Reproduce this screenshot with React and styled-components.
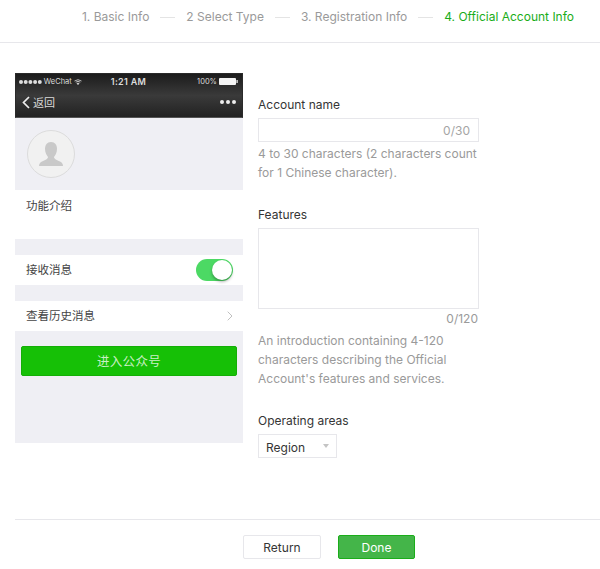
import React from 'react'
import styled, { createGlobalStyle } from 'styled-components'

const Global = createGlobalStyle`
  html, body { margin: 0; padding: 0; background: #fff; }
  body { font-family: Inter, "Noto Sans CJK SC", sans-serif; color: #353535; }
  * { box-sizing: border-box; }
`

const Page = styled.div`
  width: 600px;
  height: 569px;
  overflow: hidden;
  display: flex;
  flex-direction: column;
`

const Steps = styled.ol`
  list-style: none;
  margin: 0;
  height: 43px;
  padding: 9px 26px 0 0;
  display: flex;
  justify-content: flex-end;
  border-bottom: 1px solid #e7e7eb;
  font-size: 12px;
  line-height: 16px;
`

const Step = styled.li`
  color: ${p => (p.$active ? '#1aad19' : '#9a9a9a')};
  display: flex;
  align-items: center;
  height: 16px;
  &:not(:last-child)::after {
    content: '';
    width: 15px;
    height: 1px;
    background: #e4e4e4;
    margin: 0 11px;
  }
`

const Main = styled.div`
  flex: 1;
  display: flex;
  gap: 15px;
  padding: 30px 0 0 15px;
`

const Phone = styled.div`
  width: 228px;
  height: 370px;
  background: #efeff4;
  display: flex;
  flex-direction: column;
`

const TopBar = styled.div`
  height: 45px;
  padding: 0 4px 0 3px;
  background: linear-gradient(#1c1c1c, #3a3a3a 50%, #222);
  color: #fff;
  display: flex;
  flex-direction: column;
  border: 1px solid #2a2a2a;
  border-bottom: 1px solid #555;
`

const StatusRow = styled.div`
  height: 15px;
  display: grid;
  grid-template-columns: 1fr auto 1fr;
  align-items: center;
  font-size: 7.5px;
  color: #ddd;
`

const StatusGroup = styled.span`
  display: flex;
  align-items: center;
  justify-content: ${p => (p.$end ? 'flex-end' : 'flex-start')};
  gap: 2px;
`

const StatusTime = styled.span`
  font-weight: 600;
  font-size: 9px;
  letter-spacing: 0.3px;
`

const NavRow = styled.div`
  flex: 1;
  display: flex;
  align-items: center;
  justify-content: space-between;
  padding: 0 2px 2px 3px;
  font-size: 11px;
  color: #d8d8d8;
`

const BackLink = styled.span`
  display: flex;
  align-items: center;
  gap: 3px;
`

const Avatar = styled.div`
  height: 72px;
  padding: 12px 0 0 12px;
`

const AvatarCircle = styled.div`
  width: 48px;
  height: 48px;
  border-radius: 50%;
  background: #f1f1f1;
  border: 1px solid #dcdcdc;
  display: flex;
  align-items: center;
  justify-content: center;
`

const Cell = styled.div`
  background: #fff;
  height: ${p => p.$height}px;
  margin-bottom: ${p => p.$gap}px;
  padding: ${p => (p.$top ? '8px 10px 0 11px' : '0 10px 0 11px')};
  display: flex;
  align-items: ${p => (p.$top ? 'flex-start' : 'center')};
  justify-content: space-between;
  font-size: 11.5px;
  line-height: 16px;
  color: #444;
`

const Toggle = styled.span`
  position: relative;
  width: 37px;
  height: 22px;
  border-radius: 11px;
  background: #4cd964;
  &::after {
    content: '';
    position: absolute;
    right: 1px;
    top: 1px;
    width: 20px;
    height: 20px;
    border-radius: 50%;
    background: #fff;
    box-shadow: 0 2px 3px rgba(0, 0, 0, 0.3);
  }
`

const EnterButton = styled.div`
  margin: 15px 6px 0;
  height: 30px;
  padding-bottom: 2px;
  border-radius: 2px;
  background: #16c006;
  border: 1px solid #14ae06;
  color: #c9efc4;
  font-size: 12.5px;
  display: flex;
  align-items: center;
  justify-content: center;
  letter-spacing: 0.3px;
`

const Form = styled.form`
  width: 221px;
  padding-top: 24px;
  display: flex;
  flex-direction: column;
`

const Field = styled.div`
  margin-bottom: ${p => p.$gap}px;
`

const Label = styled.div`
  font-size: 12px;
  line-height: 16px;
  color: #353535;
  margin-bottom: 5px;
`

const InputBox = styled.div`
  height: ${p => p.$height}px;
  border: 1px solid #e7e7eb;
  display: flex;
  align-items: center;
  justify-content: flex-end;
  padding-right: 8px;
  font-size: 12px;
  color: #a5a5a5;
`

const Counter = styled.div`
  text-align: right;
  padding-right: 1px;
  font-size: 12px;
  line-height: 19px;
  color: #9a9a9a;
`

const Hint = styled.p`
  margin: ${p => p.$top}px 0 0;
  font-size: 12px;
  line-height: 19px;
  color: #9a9a9a;
`

const Select = styled.div`
  position: relative;
  width: 79px;
  height: 24px;
  border: 1px solid #e7e7eb;
  padding: 3px 0 0 7px;
  display: flex;
  align-items: center;
  font-size: 12px;
  color: #353535;
  &::after {
    content: '';
    position: absolute;
    right: 7px;
    top: 9px;
    border: 3px solid transparent;
    border-top: 4px solid #c4c4c4;
    border-bottom: 0;
  }
`

const Footer = styled.div`
  margin-left: 15px;
  height: 50px;
  border-top: 1px solid #e7e7eb;
  padding: 15px 0 0 228px;
  display: flex;
  gap: 17px;
`

const Button = styled.div`
  width: ${p => (p.$primary ? 77 : 78)}px;
  height: 24px;
  border-radius: 2px;
  border: 1px solid ${p => (p.$primary ? '#1aad19' : '#e7e7eb')};
  background: ${p => (p.$primary ? '#44b549' : '#fff')};
  color: ${p => (p.$primary ? '#fff' : '#353535')};
  font-size: 12px;
  display: flex;
  align-items: center;
  justify-content: center;
`

const Wifi = () => (
  <svg width="8" height="6" viewBox="0 0 8 6" fill="none" stroke="#ddd" strokeWidth="0.8">
    <path d="M0.5 2 Q4 -0.6 7.5 2" />
    <path d="M1.7 3.2 Q4 1.4 6.3 3.2" />
    <path d="M3 4.5 Q4 3.7 5 4.5 L4 5.6 Z" fill="#ddd" />
  </svg>
)

const Battery = () => (
  <svg width="19" height="7" viewBox="0 0 19 7">
    <rect x="0" y="0" width="17" height="7" rx="1" fill="#f4f4f4" />
    <rect x="17.4" y="2" width="1.4" height="3" fill="#ddd" />
  </svg>
)

const Dots = ({ count, size, gap, color }) => (
  <svg width={count * size + (count - 1) * gap} height={size}>
    {Array.from({ length: count }).map((_, i) => (
      <circle key={i} cx={size / 2 + i * (size + gap)} cy={size / 2} r={size / 2} fill={color} />
    ))}
  </svg>
)

const App = () => (
  <Page>
    <Global />
    <Steps>
      <Step>1. Basic Info</Step>
      <Step>2 Select Type</Step>
      <Step>3. Registration Info</Step>
      <Step $active>4. Official Account Info</Step>
    </Steps>
    <Main>
      <Phone>
        <TopBar>
          <StatusRow>
            <StatusGroup>
              <Dots count={5} size={4} gap={0.7} color="#ddd" />
              WeChat
              <Wifi />
            </StatusGroup>
            <StatusTime>1:21 AM</StatusTime>
            <StatusGroup $end>
              100%
              <Battery />
            </StatusGroup>
          </StatusRow>
          <NavRow>
            <BackLink>
              <svg width="8" height="13" viewBox="0 0 8 13" fill="none" stroke="#eee" strokeWidth="1.7">
                <path d="M7 1 L1.5 6.5 L7 12" />
              </svg>
              返回
            </BackLink>
            <Dots count={3} size={4} gap={2} color="#eee" />
          </NavRow>
        </TopBar>
        <Avatar>
          <AvatarCircle>
            <svg width="24" height="25" viewBox="0 0 24 25" fill="#c9c9c9">
              <path d="M12 0 C16 0 18 3 18 7 C18 11 16 13.500 15 15 C15 17 18 18 21 19.500 C23 20.500 24 22 24 24 L0 24 C0 22 1 20.500 3 19.500 C6 18 9 17 9 15 C8 13.500 6 11 6 7 C6 3 8 0 12 0 Z" />
            </svg>
          </AvatarCircle>
        </Avatar>
        <Cell $height={49} $gap={16} $top>功能介绍</Cell>
        <Cell $height={30} $gap={16}>
          接收消息
          <Toggle />
        </Cell>
        <Cell $height={30} $gap={0}>
          查看历史消息
          <svg width="6" height="10" viewBox="0 0 6 10" fill="none" stroke="#c0c0c0" strokeWidth="1">
            <path d="M0.700 0.700 L5 5 L0.700 9.300" />
          </svg>
        </Cell>
        <EnterButton>进入公众号</EnterButton>
      </Phone>
      <Form>
        <Field $gap={25}>
          <Label>Account name</Label>
          <InputBox $height={24}>0/30</InputBox>
          <Hint $top={2}>4 to 30 characters (2 characters count for 1 Chinese character).</Hint>
        </Field>
        <Field $gap={25}>
          <Label>Features</Label>
          <InputBox $height={81} />
          <Counter>0/120</Counter>
          <Hint $top={3}>An introduction containing 4-120 characters describing the Official Account's features and services.</Hint>
        </Field>
        <Field $gap={0}>
          <Label>Operating areas</Label>
          <Select>Region</Select>
        </Field>
      </Form>
    </Main>
    <Footer>
      <Button>Return</Button>
      <Button $primary>Done</Button>
    </Footer>
  </Page>
)

export default App
